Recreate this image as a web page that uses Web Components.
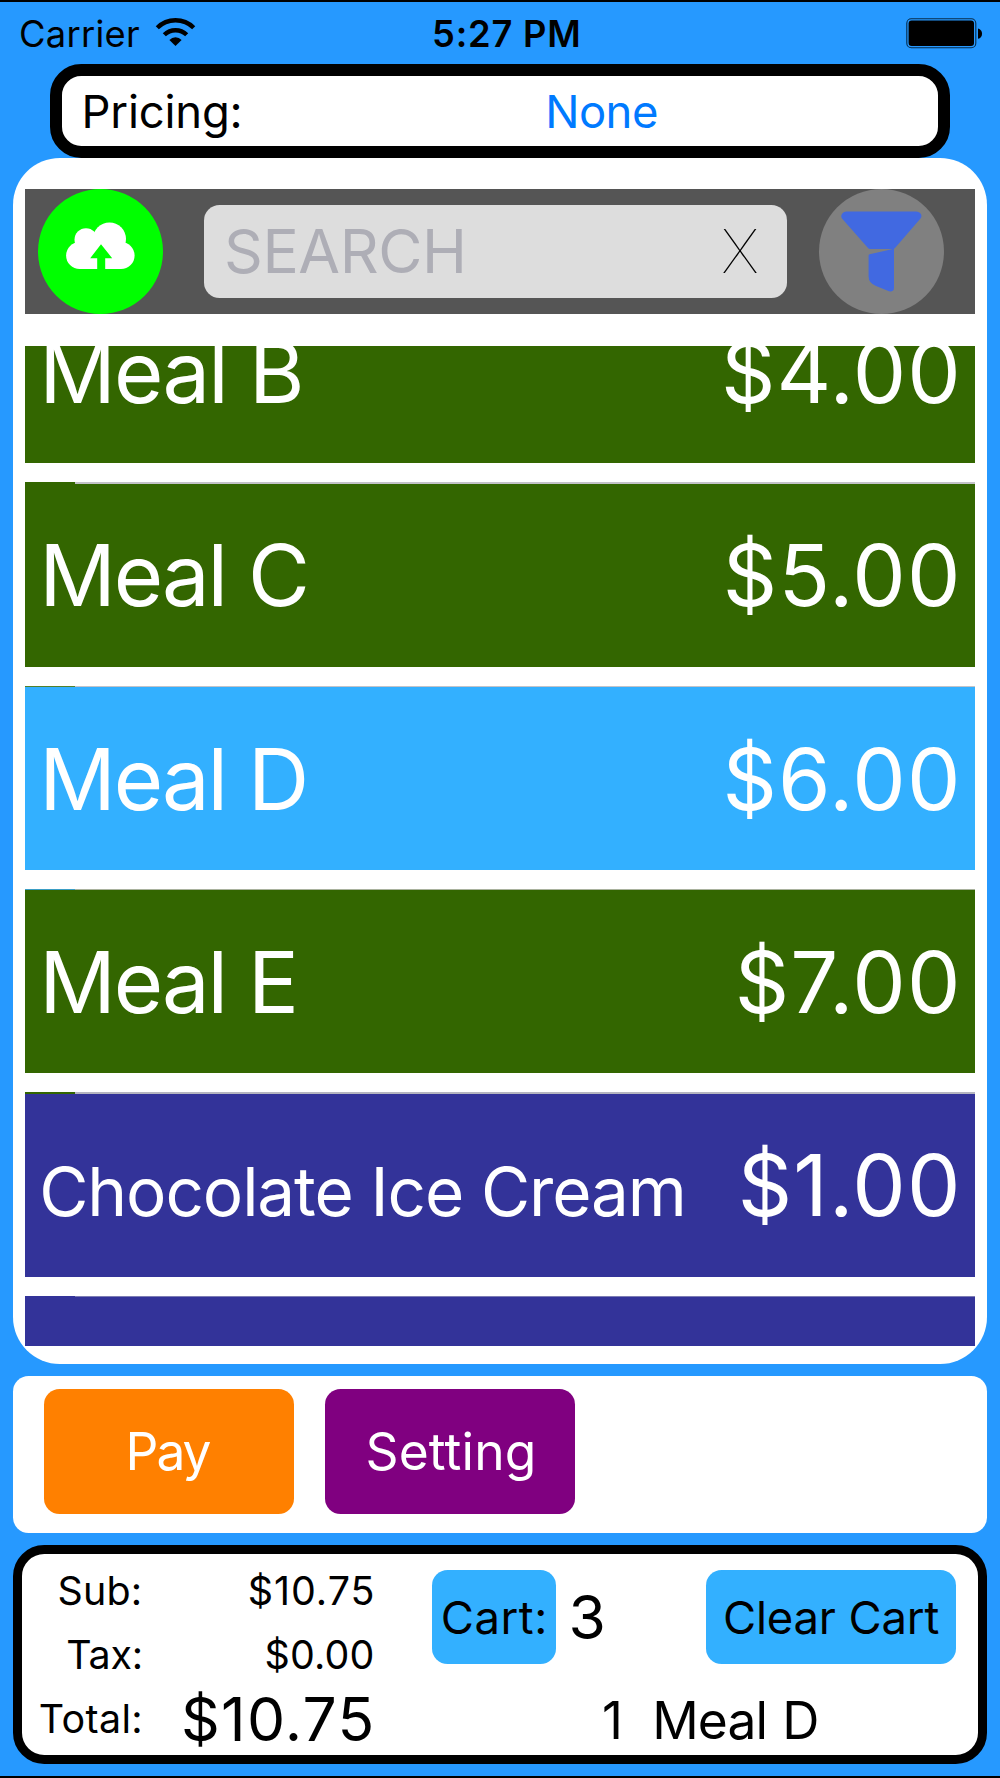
<!DOCTYPE html>
<html lang="en">
<head>
<meta charset="utf-8">
<title>Point of Sale</title>
<style>
  :root {
    --pos-blue: #2699ff;
    --pos-sky: #33b0ff;
    --pos-green: #336600;
    --pos-navy: #333399;
    --pos-line: #c3c3c8;
  }
  body {
    margin: 0;
    background: #000;
    color: #000;
    font-family: Inter, "Liberation Sans", sans-serif;
  }
</style>
</head>
<body>

<pos-app>
  <pos-status-bar slot="status" carrier="Carrier" time="5:27 PM"></pos-status-bar>
  <pos-pricing slot="pricing" label="Pricing:" value="None"></pos-pricing>

  <pos-catalog slot="catalog">
    <pos-search slot="search" placeholder="SEARCH"></pos-search>
    <pos-item name="Meal B" price="$4.00" track="-1.83" price-track="1"></pos-item>
    <pos-item name="Meal C" price="$5.00" track="-2.03"></pos-item>
    <pos-item name="Meal D" price="$6.00" track="-2.03" style="--bg: var(--pos-sky); --stub: #53802b"></pos-item>
    <pos-item name="Meal E" price="$7.00" track="-2.03" style="--stub: #3a9dc4; --line: #a9b29d"></pos-item>
    <pos-item name="Chocolate Ice Cream" price="$1.00" size="67.4" track="-1.09" style="--bg: var(--pos-navy); --line: #b5b5c0"></pos-item>
    <pos-item name="" price="" style="--bg: var(--pos-navy); --stub: #333399; --line: #7c7cb4"></pos-item>
  </pos-catalog>

  <pos-panel slot="actions">
    <pos-button style="--bg: #ff8000; --nudge: 2px 3px 0 0"><pos-label size="51.5" track="-2.03">Pay</pos-label></pos-button>
    <pos-button style="--bg: #800080; --nudge: 2px 0 0 2px"><pos-label size="51.5" track="0.13">Setting</pos-label></pos-button>
  </pos-panel>

  <pos-cart slot="cart" sub="$10.75" tax="$0.00" total="$10.75" count="3" last="1  Meal D"></pos-cart>
</pos-app>

<script>
/* Base class: renders once into an open shadow root */
class PosElement extends HTMLElement {
  constructor() {
    super();
    this.attachShadow({ mode: 'open' });
  }

  connectedCallback() {
    this.shadowRoot.innerHTML = this.template().trim();
  }

  attr(name, fallback = '') {
    return this.getAttribute(name) ?? fallback;
  }
}

/* Single line of text. size = font size in px, track = letter spacing in px */
class PosLabel extends PosElement {
  // white-space is pre here, so no whitespace may surround the slot
  template() {
    return `
      <style>
        :host {
          display: block;
          font-size: ${this.attr('size', '45.4')}px;
          letter-spacing: ${this.attr('track', '0')}px;
          font-weight: ${this.attr('weight', '400')};
          line-height: 1;
          white-space: pre;
        }
      </style><slot></slot>
    `;
  }
}

class PosApp extends PosElement {
  template() {
    return `
      <style>
        :host {
          display: flex;
          flex-direction: column;
          box-sizing: border-box;
          height: 1778px;
          border-top: 2px solid #000;
          border-bottom: 2px solid #000;
          background: var(--pos-blue);
          overflow: hidden;
        }
        ::slotted(*) { flex: none; }
        ::slotted([slot="status"]) { height: 62px; }
        ::slotted([slot="pricing"]) { height: 93.5px; margin: 0 50px; }
        ::slotted([slot="catalog"]) { height: 1206.5px; margin: 0 13px; }
        ::slotted([slot="actions"]) { height: 156.6px; margin: 12px 13px 12.7px; }
        ::slotted([slot="cart"]) { height: 218.6px; margin: 0 13px; }
      </style>
      <slot name="status"></slot>
      <slot name="pricing"></slot>
      <slot name="catalog"></slot>
      <slot name="actions"></slot>
      <slot name="cart"></slot>
    `;
  }
}

class PosStatusBar extends PosElement {
  template() {
    return `
      <style>
        :host {
          display: grid;
          grid-template-columns: 131px 282px 1fr auto;
          align-items: start;
          box-sizing: border-box;
          padding: 8px 16px 0 19px;
        }
        pos-label { margin-top: 6.3px; }
        svg { display: block; }
        .battery { margin-top: 8px; }
      </style>
      <pos-label size="36.3" track="0.28">${this.attr('carrier')}</pos-label>
      <svg width="50" height="45" viewBox="0 0 50 45">
        <g fill="none" stroke="#000" stroke-width="4.4">
          <path d="M7.3 17.8a25.8 25.8 0 0 1 36.4 0"/>
          <path d="M14.3 24.8a15.9 15.9 0 0 1 22.4 0"/>
        </g>
        <path d="M25.5 36l-6.1-6.1a8.6 8.6 0 0 1 12.2 0z"/>
      </svg>
      <pos-label size="36.3" track="0.8" weight="600">${this.attr('time')}</pos-label>
      <svg class="battery" width="78" height="31" viewBox="0 0 78 31">
        <rect x=".8" y=".8" width="69" height="29" rx="4.5" fill="none" stroke="#072c4c" stroke-width="1.1"/>
        <rect x="2.6" y="2.6" width="65.4" height="25.4" rx="3"/>
        <path d="M72 10.4c5.4 1 5.4 9.4 0 10.4z"/>
      </svg>
    `;
  }
}

class PosPricing extends PosElement {
  template() {
    return `
      <style>
        :host {
          display: grid;
          grid-template-columns: 463.7px 1fr;
          align-items: start;
          box-sizing: border-box;
          padding: 13px 19.5px 0;
          border: 12px solid #000;
          border-radius: 31.25px;
          background: #fff;
        }
        .value { color: #007aff; }
      </style>
      <pos-label size="45.4" track="-0.19">${this.attr('label')}</pos-label>
      <pos-label class="value" size="45.4" track="-0.5">${this.attr('value')}</pos-label>
    `;
  }
}

/* White card holding the search bar and the scrolled item list */
class PosCatalog extends PosElement {
  template() {
    return `
      <style>
        :host {
          display: block;
          box-sizing: border-box;
          padding: 31.5px 12px 0;
          border-radius: 46.9px;
          background: #fff;
        }
        .list {
          height: 999.9px;
          margin-top: 31.8px;
          overflow: hidden;
        }
        .rows { margin-top: -66.85px; }
      </style>
      <slot name="search"></slot>
      <div class="list"><div class="rows"><slot></slot></div></div>
    `;
  }
}

class PosSearch extends PosElement {
  template() {
    return `
      <style>
        :host {
          display: flex;
          align-items: center;
          height: 125px;
          padding-left: 13px;
          background: #555;
        }
        .round {
          flex: none;
          width: 125px;
          height: 125px;
          border-radius: 50%;
        }
        .upload { background: #0f0; }
        .filter { background: #808080; }
        .round svg { display: block; }
        .field {
          display: flex;
          align-items: center;
          justify-content: space-between;
          box-sizing: border-box;
          width: 582.7px;
          height: 92.2px;
          margin: 0 32.3px 0 41px;
          padding: 0 28px 0 20px;
          border-radius: 15.6px;
          background: #ddd;
        }
        .placeholder { color: #aeaeb6; }
      </style>
      <div class="round upload">
        <svg width="125" height="125" viewBox="0 0 125 125">
          <g fill="#fff">
            <circle cx="48" cy="50.7" r="11.5"/>
            <circle cx="71.5" cy="50" r="16.5"/>
            <circle cx="41.7" cy="66.5" r="13.6"/>
            <circle cx="83" cy="66.5" r="13.6"/>
            <path d="M41.7 55h6.3v-5h24l11 5v25.1H41.7z"/>
          </g>
          <path fill="#0f0" d="M63 55.3l11.2 13.9h-7V81h-8V69.2h-7z"/>
        </svg>
      </div>
      <div class="field">
        <pos-label class="placeholder" size="60.5" track="-0.41">${this.attr('placeholder')}</pos-label>
        <pos-label class="clear" size="60.5" weight="100">X</pos-label>
      </div>
      <div class="round filter">
        <svg width="125" height="125" viewBox="0 0 125 125">
          <g fill="#4169e1">
            <path d="M27.5 22.5H97c4.5 0 7 4 4.5 7L76 59q-.8 1-2 1H51q-1.2 0-2-1L23 29.5c-2-3 .5-7 4.5-7z"/>
            <path d="M49.6 66.5q0-1 1-1.3L75 59.7V99q0 4-5 3.3L57 97q-7.4-3-7.4-9.5z"/>
          </g>
        </svg>
      </div>
    `;
  }
}

/* One product row: hairline, coloured body, then the white gap */
class PosItem extends PosElement {
  template() {
    return `
      <style>
        :host {
          display: block;
          height: 203.35px;
        }
        .line {
          height: 1.3px;
          background: linear-gradient(to right, var(--stub, var(--pos-green)) 50px, var(--line, var(--pos-line)) 50px);
        }
        .body {
          display: flex;
          align-items: baseline;
          justify-content: space-between;
          box-sizing: border-box;
          height: 183px;
          padding: 49.8px 13.3px 0 14.2px;
          background: var(--bg, var(--pos-green));
          color: #fff;
        }
      </style>
      <div class="line"></div>
      <div class="body">
        <pos-label size="${this.attr('size', '84.8')}" track="${this.attr('track', '0')}">${this.attr('name')}</pos-label>
        <pos-label size="84.8" track="${this.attr('price-track', '1.18')}">${this.attr('price')}</pos-label>
      </div>
    `;
  }
}

class PosPanel extends PosElement {
  template() {
    return `
      <style>
        :host {
          display: flex;
          gap: 31px;
          box-sizing: border-box;
          padding: 12.6px 31px 0;
          border-radius: 15.6px;
          background: #fff;
        }
      </style>
      <slot></slot>
    `;
  }
}

class PosButton extends PosElement {
  template() {
    return `
      <style>
        :host {
          display: flex;
          align-items: center;
          justify-content: center;
          box-sizing: border-box;
          width: 250px;
          height: 125px;
          padding: var(--nudge, 0);
          border-radius: 15.6px;
          background: var(--bg, var(--pos-sky));
          color: #fff;
        }
      </style>
      <slot></slot>
    `;
  }
}

class PosCart extends PosElement {
  template() {
    return `
      <style>
        :host {
          display: flex;
          box-sizing: border-box;
          padding: 15.7px 22px 0 17.5px;
          border: 9px solid #000;
          border-radius: 31.25px;
          background: #fff;
        }
        .totals {
          display: grid;
          grid-template-columns: 103.5px 1fr;
          grid-auto-rows: 64px;
          justify-items: end;
          align-items: start;
          width: 336px;
          padding-top: 2.4px;
        }
        .sub { padding-right: 0.5px; }
        .total { margin-top: -11px; }
        .order { margin-left: 56px; width: 524.5px; }
        .bar {
          display: flex;
          align-items: center;
        }
        pos-button { --nudge: 1px 0 0; height: 93.7px; color: #000; }
        .cart { width: 124.5px; --nudge: 1px 0 0 1px; }
        .clear { margin-left: auto; }
        .count { margin-left: 12.5px; }
        .last { margin: 31.2px 0 0 170.5px; word-spacing: 1.5px; }
      </style>
      <div class="totals">
        <pos-label class="sub" size="39.4" track="0.27">Sub:</pos-label>
        <pos-label size="39.4" track="1">${this.attr('sub')}</pos-label>
        <pos-label size="39.4" track="-0.2">Tax:</pos-label>
        <pos-label size="39.4" track="0.17" style="padding-right: 1px">${this.attr('tax')}</pos-label>
        <pos-label size="39.4" track="0.36">Total:</pos-label>
        <pos-label class="total" size="60.5" track="1.24">${this.attr('total')}</pos-label>
      </div>
      <div class="order">
        <div class="bar">
          <pos-button class="cart"><pos-label size="45.4" track="0.55">Cart:</pos-label></pos-button>
          <pos-label class="count" size="60.5">${this.attr('count')}</pos-label>
          <pos-button class="clear"><pos-label size="45.4" track="-0.15">Clear Cart</pos-label></pos-button>
        </div>
        <pos-label class="last" size="51.5" track="-0.9">${this.attr('last')}</pos-label>
      </div>
    `;
  }
}

customElements.define('pos-label', PosLabel);
customElements.define('pos-app', PosApp);
customElements.define('pos-status-bar', PosStatusBar);
customElements.define('pos-pricing', PosPricing);
customElements.define('pos-catalog', PosCatalog);
customElements.define('pos-search', PosSearch);
customElements.define('pos-item', PosItem);
customElements.define('pos-panel', PosPanel);
customElements.define('pos-button', PosButton);
customElements.define('pos-cart', PosCart);
</script>
</body>
</html>
